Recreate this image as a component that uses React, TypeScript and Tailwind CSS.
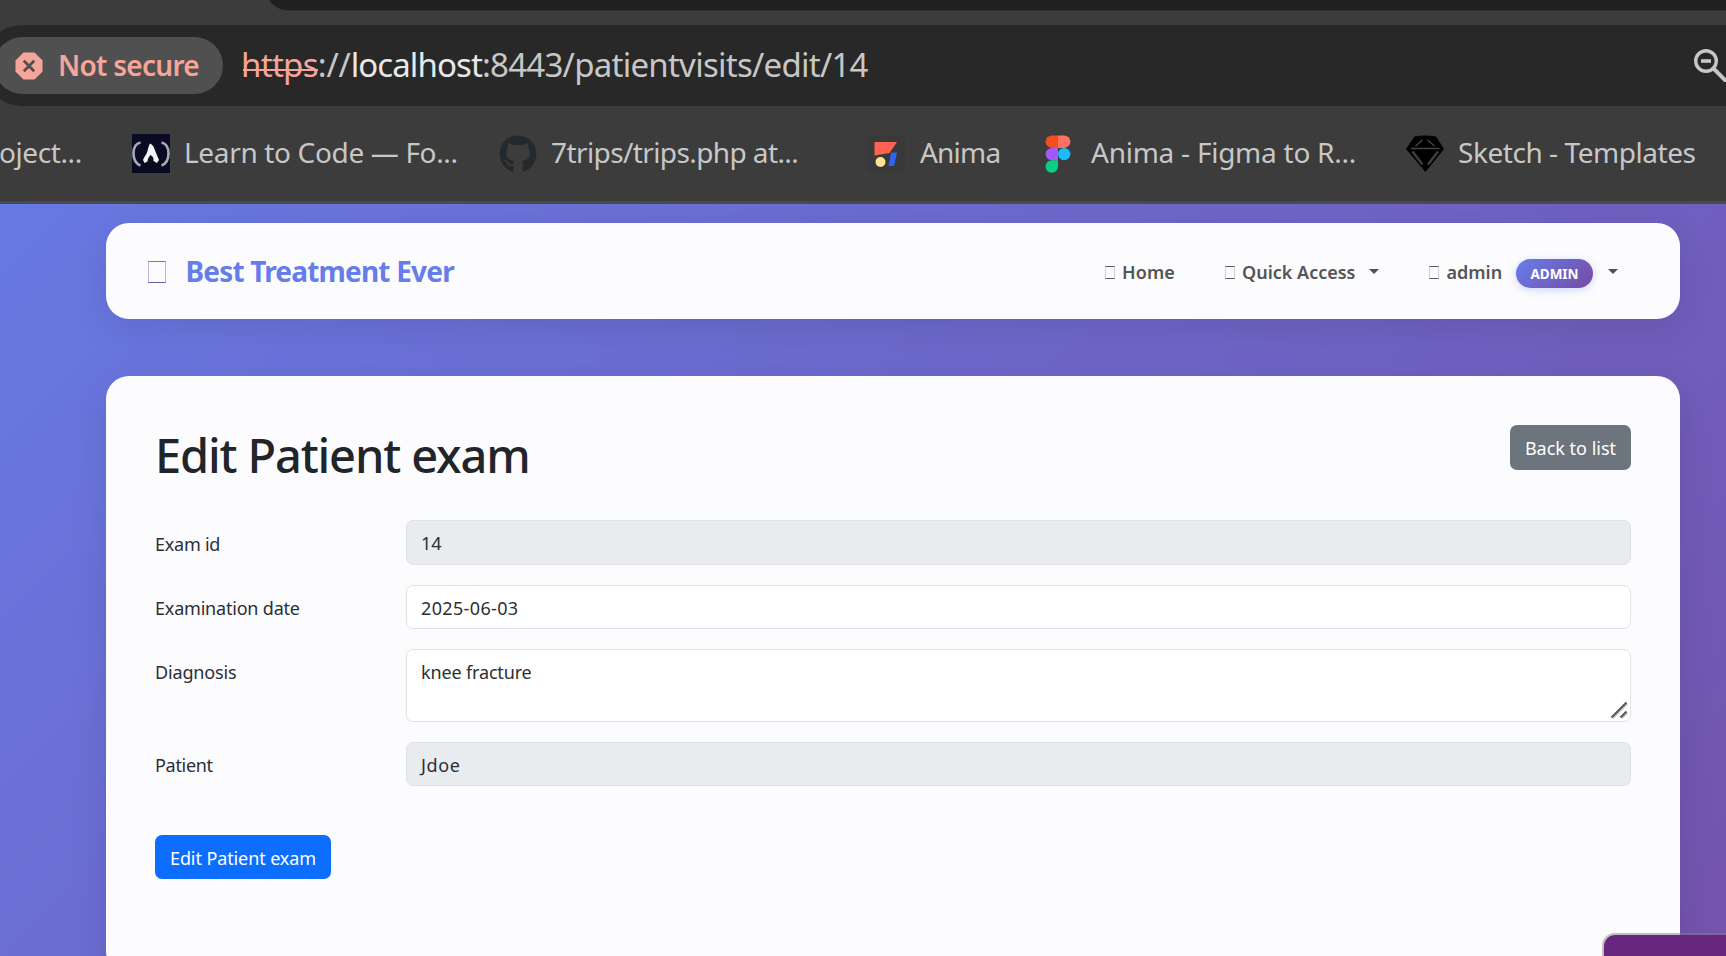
import type { ReactNode } from "react";
import { FaGithub } from "react-icons/fa";

function DangerIcon() {
  return (
    <svg className="h-7 w-7 shrink-0" viewBox="0 0 28 28">
      <path d="M8.5 0.5h11l8 8v11l-8 8h-11l-8-8v-11z" fill="#f6a59b" />
      <path d="M8.8 8.8l10.4 10.4M19.2 8.8L8.8 19.2" stroke="#505050" strokeWidth="2.8" />
    </svg>
  );
}

function ZoomOutIcon() {
  return (
    <svg className="-mt-px ml-auto h-[34px] w-8 shrink-0" viewBox="0 0 32 34" fill="none" stroke="#c7c7c7">
      <circle cx="12" cy="13" r="10.300" strokeWidth="3.400" />
      <path d="M7 13h10" strokeWidth="3.600" />
      <path d="M19.500 20.500L34 35" strokeWidth="4" />
    </svg>
  );
}

function CampIcon() {
  return (
    <svg className="h-[39px] w-[38px] shrink-0" viewBox="0 0 38 39">
      <rect width="38" height="39" fill="#0a0a23" />
      <path d="M8.500 8.500C4 9.500 1.500 14 1.500 19.500C1.500 25.500 4.500 30 8.500 31.500" fill="none" stroke="#a9a9b6" strokeWidth="2.600" />
      <path d="M29.500 8.500C34 9.500 36.500 14 36.500 19.500C36.500 25.500 33.500 30 29.500 31.500" fill="none" stroke="#a9a9b6" strokeWidth="2.600" />
      <path d="M18 9.500c2.500 1 4 3.500 5 7l4 9.500-2 3-3.500-2c.5-3-1-5-3-6-1.500 2-3 4-3 6.500l-3 1.500-1.500-3c1-3.500 3.500-5 4.500-9 .5-2.500 1-4.500 2.500-7.500z" fill="#f4f4f6" />
    </svg>
  );
}

function AnimaIcon() {
  return (
    <svg className="h-[38px] w-[38px] shrink-0" viewBox="0 0 38 38">
      <rect width="37" height="38" fill="#393939" />
      <path d="M6.500 7H29L21.500 18 6.500 20.500z" fill="#ff6250" />
      <circle cx="12.500" cy="27" r="5" fill="#ffe294" />
      <path d="M23 17.500h6l-3 13.500h-5.500z" fill="#2f62f5" />
    </svg>
  );
}

function FigmaIcon() {
  return (
    <svg className="h-[38px] w-[38px] shrink-0" viewBox="0 0 38 38">
      <path d="M19 .5h-6.200a6.200 6.200 0 0 0 0 12.400H19z" fill="#f24e1e" />
      <path d="M19 .5h6.200a6.200 6.200 0 0 1 0 12.400H19z" fill="#ff7262" />
      <path d="M19 12.900h-6.200a6.200 6.200 0 0 0 0 12.400H19z" fill="#a259ff" />
      <circle cx="25.200" cy="19.100" r="6.200" fill="#1abcfe" />
      <path d="M12.800 25.300H19v6.200a6.200 6.200 0 1 1-6.200-6.200z" fill="#0acf83" />
    </svg>
  );
}

function SketchIcon() {
  return (
    <svg className="h-[38px] w-[38px] shrink-0" viewBox="0 0 38 38">
      <path d="M8.500 1.500Q19-.5 30 1.500L38 14 19.500 37 0 14z" fill="#000" />
      <path d="M5 13.600h28.500M9.500 11l7-6M28.500 11l-7-6" stroke="#444" strokeWidth="1.500" fill="none" />
      <path d="M6.500 16.500l10 13M32 16.500L22 29.500" stroke="#3c3c3c" strokeWidth="2.600" fill="none" />
    </svg>
  );
}

function Bookmark({ icon, className, children }: { icon?: ReactNode; className: string; children: ReactNode }) {
  return (
    <div className={`flex shrink-0 items-center gap-[14px] ${className}`}>
      {icon}
      <span className="-mt-[3px]">{children}</span>
    </div>
  );
}

function BrowserChrome() {
  return (
    <header className="flex h-[204px] flex-col overflow-hidden border-b-[3px] border-[#4a4a4a] bg-[#3c3c3c]">
      <div className="ml-[265px] h-[11px] shrink-0 overflow-hidden">
        <div className="-mt-4 h-[27px] rounded-bl-[24px] border-b border-[#2e302f] bg-[#1f2120]" />
      </div>
      <div className="-ml-[18px] mt-[14px] flex h-[81px] shrink-0 items-center rounded-l-[40.5px] bg-[#282828] pl-3">
        <div className="flex h-[57px] w-[229px] shrink-0 items-center rounded-full bg-[#505050] pl-[21px]">
          <DangerIcon />
          <span className="-mt-px ml-[15px] text-[28px] font-semibold leading-[56px] tracking-[-0.72px] text-[#f6a59b]">
            Not secure
          </span>
        </div>
        <div className="ml-[18px] flex text-[33px] leading-[78px] text-[#c7c7c7]">
          <span className="relative -mt-px tracking-[-0.700px] text-[#f6a59b] after:absolute after:left-[2px] after:right-0 after:top-[43px] after:h-[2px] after:bg-[#f6a59b]">
            https
          </span>
          <span className="-mt-px tracking-[-0.2px]">://</span>
          <span className="-mt-px tracking-[-0.900px] text-[#e8e8e8]">localhost</span>
          <span className="-mt-px tracking-[-0.740px]">:8443/patientvisits/edit/14</span>
        </div>
        <ZoomOutIcon />
      </div>
      <nav className="flex h-[95px] shrink-0 items-center whitespace-nowrap text-[28px] leading-10 text-[#c7c7c7]">
        <Bookmark className="-ml-[1px] w-[133px] tracking-[-0.4px]">oject...</Bookmark>
        <Bookmark className="w-[367px] tracking-[-0.34px]" icon={<CampIcon />}>Learn to Code — Fo...</Bookmark>
        <Bookmark className="w-[369px] tracking-[-0.6px]" icon={<FaGithub className="h-[38px] w-[38px] shrink-0 text-[#24292e]" />}>
          7trips/trips.php at...
        </Bookmark>
        <Bookmark className="w-[171px] tracking-[-0.8px]" icon={<AnimaIcon />}>Anima</Bookmark>
        <Bookmark className="w-[367px] tracking-[-0.25px]" icon={<FigmaIcon />}>Anima - Figma to R...</Bookmark>
        <Bookmark className="tracking-[-0.45px]" icon={<SketchIcon />}>Sketch - Templates</Bookmark>
      </nav>
    </header>
  );
}

function Glyph() {
  return <span className="mt-[2px] h-[13px] w-[10px] shrink-0 border-x border-y border-x-[#cfcfcf] border-y-[#5a5a5a]" />;
}

function Caret() {
  return (
    <svg className="h-[5px] w-[10px] shrink-0" viewBox="0 0 10 5">
      <path d="M0 0h10L5 5z" fill="#505050" />
    </svg>
  );
}

function Navbar() {
  return (
    <nav className="flex h-24 shrink-0 items-center rounded-[23px] bg-[#fcfcfe] pl-[42px] pr-[62px] shadow-[0_9px_36px_rgba(0,0,0,0.1)]">
      <span className="mt-[2px] h-[22px] w-[18px] border-x border-y border-x-[#bdb4e2] border-b-[#7455b5] border-t-[#7a73cb]" />
      <span className="ml-[19.5px] text-[28px] font-bold leading-10 tracking-[-0.81px] text-[#667eea]">Best Treatment Ever</span>
      <div className="ml-auto flex items-center text-[18px] font-[560] leading-6 text-[#555]">
        <div className="flex w-[120px] items-center">
          <Glyph />
          <span className="ml-[7px] mt-[2px] tracking-[0.1px]">Home</span>
        </div>
        <div className="flex w-[204px] items-center">
          <Glyph />
          <span className="ml-[7px] mt-[2px] w-[127px]">Quick Access</span>
          <Caret />
        </div>
        <div className="flex w-[189px] items-center">
          <Glyph />
          <span className="ml-[7.5px] mt-[2px] w-[69px]">admin</span>
          <span className="mt-[5px] flex h-[29px] w-[77px] items-center justify-center rounded-[15px] bg-[linear-gradient(135deg,#667eea_0%,#764ba2_100%)] pl-px text-[13.500px] font-bold text-white shadow-[0_2px_9px_rgba(102,126,234,0.3)]">
            ADMIN
          </span>
          <span className="ml-[15px] flex">
            <Caret />
          </span>
        </div>
      </div>
    </nav>
  );
}

function Field({ label, children, className, labelClass }: { label: string; children: ReactNode; className: string; labelClass: string }) {
  return (
    <div className="flex">
      <div className={`w-[251px] shrink-0 leading-6 ${labelClass}`}>{label}</div>
      <div className={`relative flex-1 rounded-[7px] border border-[#dee2e6] px-[14px] pt-[10px] leading-6 ${className}`}>{children}</div>
    </div>
  );
}

function ExamForm() {
  return (
    <main className="mt-[57px] h-[598px] shrink-0 rounded-[23px] bg-[#fcfcfe] p-[49px] text-[18px] text-[#2b2f33] shadow-[0_9px_36px_rgba(0,0,0,0.1)]">
      <div className="flex h-[95px] items-start justify-between">
        <h1 className="text-[47px] font-[540] leading-[60px] tracking-[-1.15px] text-[#212529]">Edit Patient exam</h1>
        <button className="h-[45px] w-[121px] rounded-[7px] bg-[#6c757d] pt-px text-white">Back to list</button>
      </div>
      <div className="flex flex-col gap-5">
        <Field label="Exam id" labelClass="pt-[12px] tracking-[-0.25px]" className="h-[45px] bg-[#e8ecef]">14</Field>
        <Field label="Examination date" labelClass="pt-[11px] tracking-[-0.2px]" className="h-11 bg-white tracking-[0.35px]">2025-06-03</Field>
        <Field label="Diagnosis" labelClass="pt-[11px] tracking-[-0.15px]" className="h-[73px] bg-white tracking-[-0.15px]">
          knee fracture
          <svg className="absolute bottom-[2px] right-[2px] h-[18px] w-[18px]" viewBox="0 0 18 18">
            <path d="M3 17.200L17.500 2.700M12 17.200l5.500-5" stroke="#c4c4c4" strokeWidth="1.500" />
            <path d="M1.500 16.500L16.500 1.500M10.500 16.500l6-6" stroke="#5a5a5a" strokeWidth="2.200" />
          </svg>
        </Field>
        <Field label="Patient" labelClass="pt-[11px] tracking-[-0.3px]" className="h-11 bg-[#e8ecef] tracking-[0.6px]">Jdoe</Field>
      </div>
      <button className="mt-[49px] h-11 w-[176px] rounded-[7px] bg-[#0d6efd] pt-[2px] tracking-[-0.1px] text-white">Edit Patient exam</button>
    </main>
  );
}

export default function App() {
  return (
    <div className="relative flex h-[956px] w-[1726px] flex-col overflow-hidden font-['Noto_Sans','Open_Sans',sans-serif]">
      <BrowserChrome />
      <div className="flex h-[752px] flex-col overflow-hidden bg-[linear-gradient(135deg,#667eea_0%,#764ba2_100%)] bg-[length:2000px_1320px] bg-[position:-170px_-135px] pl-[106px] pr-[46px] pt-[19px]">
        <Navbar />
        <ExamForm />
      </div>
      <div className="absolute left-[1602px] top-[933px] h-12 w-40 rounded-tl-[13px] border-2 border-[#7f7f7f]/50 bg-[#69267e] bg-clip-padding" />
    </div>
  );
}
